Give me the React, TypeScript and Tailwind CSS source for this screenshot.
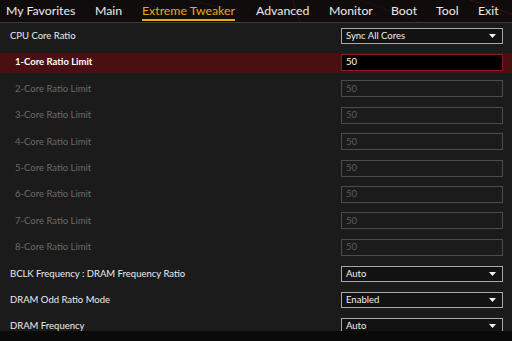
import React from "react";

const tabs: [string, number][] = [
  ["My Favorites", 89],
  ["Main", 47],
  ["Extreme Tweaker", 114],
  ["Advanced", 73],
  ["Monitor", 62],
  ["Boot", 45],
  ["Tool", 42],
  ["Exit", 34],
];

const widthClass: Record<number, string> = {
  89: "w-[89px]",
  47: "w-[47px]",
  114: "w-[114px]",
  73: "w-[73px]",
  62: "w-[62px]",
  45: "w-[45px]",
  42: "w-[42px]",
  34: "w-[34px]",
};

function Arrow() {
  return (
    <svg width="7" height="4" viewBox="0 0 7 4" className="shrink-0">
      <path d="M0 0 H7 L3.5 4 Z" fill="#f0f0f0" />
    </svg>
  );
}

function Select({ value }: { value: string }) {
  return (
    <div className="w-[162px] h-[16px] border border-[#a8a8a8] bg-[#121212] flex items-center justify-between pl-[4px] pr-[6px] text-[#f0f0f0]">
      <span>{value}</span>
      <Arrow />
    </div>
  );
}

function Input({ active }: { active?: boolean }) {
  return active ? (
    <div className="w-[162px] h-[17px] border border-[#8a1c1c] bg-black flex items-center pl-[4px] text-white">50</div>
  ) : (
    <div className="w-[162px] h-[17px] border border-[#4c4c4c] bg-[#1b1b1b] flex items-center pl-[4px] text-[#5c5c5c]">50</div>
  );
}

function Row({ label, control, active, disabled, indent }: { label: string; control: React.ReactNode; active?: boolean; disabled?: boolean; indent?: boolean }) {
  return (
    <div className="h-[26.4px] flex items-center shrink-0">
      <div className={`h-[20px] w-full flex items-center justify-between pr-[9px] ${active ? "bg-[#4a0f10]" : ""} ${indent ? "pl-[15px]" : "pl-[10px]"}`}>
        <span className={`whitespace-nowrap ${active ? "text-white font-bold" : disabled ? "text-[#6a6a6a]" : "text-[#ececec]"}`}>{label}</span>
        {control}
      </div>
    </div>
  );
}

export default function App() {
  return (
    <div className="w-[512px] h-[341px] overflow-hidden bg-[#1b1b1b] flex flex-col text-[9.5px]" style={{ fontFamily: 'Lato, "Noto Sans", sans-serif' }}>
      <div className="relative h-[23px] shrink-0 bg-[#110c0c] border-b border-[#3a3a3a] flex items-center">
        <svg className="absolute inset-0" width="512" height="22">
          <path d="M292 -2 L300 22" stroke="#3a1414" strokeWidth="1" />
          <path d="M190 0 L230 10" stroke="#2a1010" strokeWidth="1" />
          <path d="M470 0 L512 14" stroke="#3a1212" strokeWidth="1" />
          <path d="M360 0 L420 22" stroke="#241010" strokeWidth="1" />
        </svg>
        <div className="relative flex items-center pl-[6px] text-[12.3px] text-[#ededed] leading-none">
          {tabs.map(([t, w]) =>
            t === "Extreme Tweaker" ? (
              <div key={t} className={`${widthClass[w]} shrink-0`}>
                <span className="whitespace-nowrap text-[#e8a912] border-b-2 border-[#e8a912] pb-[2px] inline-block mt-[4px]">{t}</span>
              </div>
            ) : (
              <div key={t} className={`${widthClass[w]} shrink-0 whitespace-nowrap`}>{t}</div>
            )
          )}
        </div>
      </div>
      <div className="flex-1 overflow-hidden flex flex-col">
        <Row label="CPU Core Ratio" control={<Select value="Sync All Cores" />} />
        <Row label="1-Core Ratio Limit" indent active control={<Input active />} />
        {[2, 3, 4, 5, 6, 7, 8].map((n) => (
          <Row key={n} label={`${n}-Core Ratio Limit`} indent disabled control={<Input />} />
        ))}
        <Row label="BCLK Frequency : DRAM Frequency Ratio" control={<Select value="Auto" />} />
        <Row label="DRAM Odd Ratio Mode" control={<Select value="Enabled" />} />
        <Row label="DRAM Frequency" control={<Select value="Auto" />} />
      </div>
      <div className="h-[10px] shrink-0 bg-[#0a0a0a]" />
    </div>
  );
}
